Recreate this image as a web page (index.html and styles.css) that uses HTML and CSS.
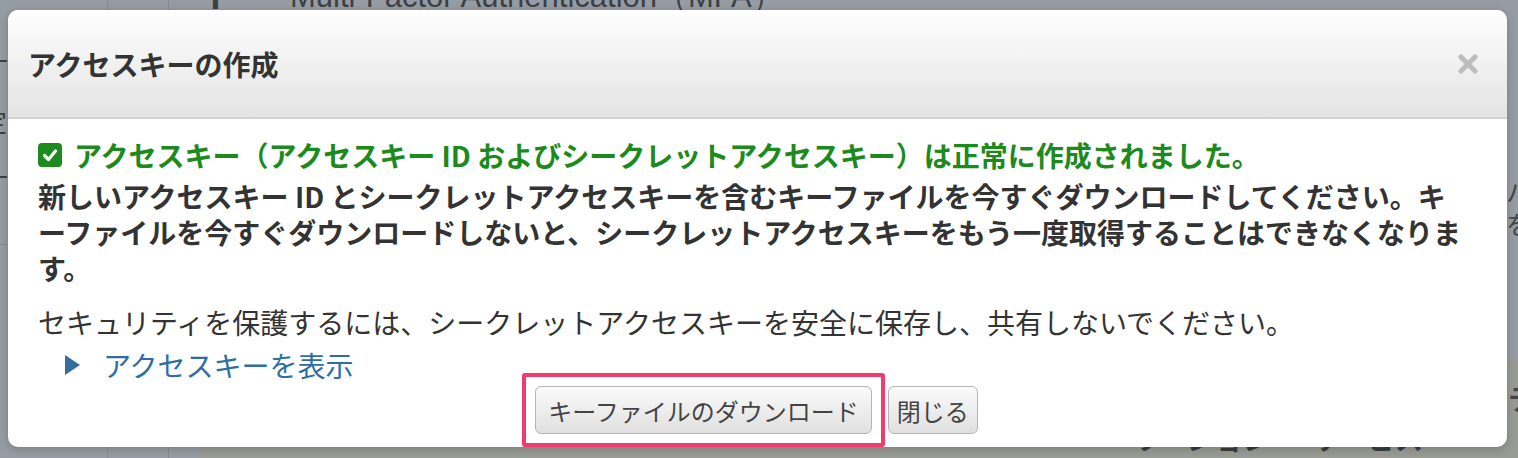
FILE: index.html
```html
<!DOCTYPE html>
<html lang="ja">
<head>
    <meta charset="UTF-8">
    <meta name="viewport" content="width=device-width, initial-scale=1.0">
    <title>アクセスキーの作成</title>
    <link rel="stylesheet" href="styles.css">
</head>
<body>
    <div class="page">
        <div class="side side-a">
            <span class="frag frag-dash"></span>
            <span class="frag frag-char">定</span>
            <span class="frag frag-dash"></span>
            <span class="frag frag-dots"></span>
        </div>
        <div class="side side-b"></div>
        <div class="main">
            <div class="main-top">
                <span class="plus">+</span>
                <span class="mfa">Multi-Factor Authentication（MFA）</span>
            </div>
            <div class="main-mid">
                <span class="edge-char">ハ</span>
                <span class="edge-char">を</span>
            </div>
            <div class="main-panel">
                <span class="edge-char edge-bold">テ</span>
                <div class="panel-cols">
                    <span>リージョン</span>
                    <span>サービス</span>
                </div>
            </div>
        </div>
    </div>

    <div class="modal">
        <div class="modal-header">
            <h3>アクセスキーの作成</h3>
            <svg class="close" width="20" height="20" viewBox="0 0 20 20">
                <path d="M3 3 L17 17 M17 3 L3 17" stroke="#bdbdbd" stroke-width="5" stroke-linecap="round" />
            </svg>
        </div>
        <div class="modal-body">
            <p class="success">
                <svg class="check" width="24" height="24" viewBox="0 0 24 24">
                    <rect x="0" y="0" width="24" height="24" rx="4" fill="#1c8a1c" />
                    <path d="M6.5 12.5 L10.5 16.5 L17.5 8" stroke="#fff" stroke-width="3.2" fill="none" stroke-linecap="round" stroke-linejoin="round" />
                </svg>
                アクセスキー（アクセスキー ID およびシークレットアクセスキー）は正常に作成されました。
            </p>
            <p class="warning">新しいアクセスキー ID とシークレットアクセスキーを含むキーファイルを今すぐダウンロードしてください。キーファイルを今すぐダウンロードしないと、シークレットアクセスキーをもう一度取得することはできなくなります。</p>
            <p class="note">セキュリティを保護するには、シークレットアクセスキーを安全に保存し、共有しないでください。</p>
            <div class="show-key">
                <svg width="15" height="20" viewBox="0 0 15 20">
                    <path d="M0 0 L15 10 L0 20 Z" fill="#336e9f" />
                </svg>
                <a href="#">アクセスキーを表示</a>
            </div>
            <div class="modal-footer">
                <div class="highlight">
                    <button class="btn">キーファイルのダウンロード</button>
                </div>
                <button class="btn btn-small">閉じる</button>
            </div>
        </div>
    </div>
</body>
</html>
```

FILE: styles.css
```css
body {
    margin: 0;
    padding: 0;
    width: 1518px;
    height: 458px;
    overflow: hidden;
    font-family: "Noto Sans CJK JP", sans-serif;
    background-color: #969ca3;
    position: relative;
}

/* dimmed page behind the dialog */
.page {
    display: flex;
    height: 458px;
}

.side {
    height: 100%;
    border-right: 1px solid #868c93;
    box-sizing: border-box;
}

.side-a {
    width: 108px;
    display: flex;
    flex-direction: column;
    padding-top: 60px;
}

.side-b {
    width: 61px;
}

.frag {
    display: block;
}

.frag-dash {
    width: 7px;
    height: 2px;
    background-color: #3d4145;
    margin-bottom: 56px;
}

.frag-char {
    font-size: 26px;
    line-height: 26px;
    color: #3d4145;
    margin-left: -19px;
    margin-top: -10px;
    margin-bottom: 42px;
}

.frag-dots {
    width: 7px;
    border-top: 1px dotted #6e747a;
    margin-top: 10px;
}

.main {
    flex: 1;
    display: flex;
    flex-direction: column;
    margin-left: 31px;
}

.main-top {
    display: flex;
    align-items: center;
    height: 10px;
    overflow: hidden;
    color: #3d4145;
    font-family: "Liberation Sans", Arial, sans-serif;
}

.main-top span {
    margin-top: -15px;
}

.plus {
    font-size: 46px;
    font-weight: bold;
    margin-left: 2px;
    width: 88px;
}

.mfa {
    font-size: 31px;
}

.main-mid {
    height: 353px;
    display: flex;
    flex-direction: column;
    align-items: flex-end;
    padding-top: 164px;
    box-sizing: border-box;
}

.edge-char {
    font-size: 26px;
    line-height: 33px;
    color: #43474b;
    margin-right: -14px;
}

.main-panel {
    flex: 1;
    background-color: #989b93;
    display: flex;
    flex-direction: column;
    align-items: flex-end;
    padding-top: 22px;
}

.edge-bold {
    font-size: 28px;
    font-weight: bold;
    margin-right: -18px;
}

.panel-cols {
    display: flex;
    gap: 40px;
    margin-top: 3px;
    margin-right: 95px;
    font-size: 28px;
    font-weight: bold;
    color: #3a3d40;
}

/* dialog */
.modal {
    position: absolute;
    top: 10px;
    left: 8px;
    width: 1499px;
    background-color: #fff;
    border-radius: 10px;
    overflow: hidden;
    box-shadow: 0 2px 8px rgba(0, 0, 0, 0.2);
}

.modal-header {
    height: 107px;
    display: flex;
    align-items: center;
    justify-content: space-between;
    padding: 0 29px 0 20px;
    background: linear-gradient(#fefefe, #e4e4e4);
    border-bottom: 2px solid #d2d2d2;
}

.modal-header h3 {
    margin: 0;
    font-size: 28px;
    font-weight: bold;
    color: #333;
}

.modal-body {
    padding: 18px 30px 0 30px;
}

.modal-body p {
    margin: 0;
    font-size: 28px;
    line-height: 36px;
}

.success {
    color: #1c8a1c;
    font-weight: bold;
    display: flex;
    align-items: center;
}

.check {
    margin-right: 12px;
    flex-shrink: 0;
}

.warning {
    margin-top: 5px !important;
    width: 1424px;
    font-weight: bold;
    color: #333;
}

.note {
    margin-top: 18px !important;
    color: #333;
}

.show-key {
    margin-top: 7px;
    display: flex;
    align-items: center;
    gap: 23px;
    padding-left: 27px;
    height: 36px;
}

.show-key a {
    color: #2c6ea5;
    text-decoration: none;
    font-size: 28px;
}

.modal-footer {
    display: flex;
    justify-content: center;
    align-items: center;
    gap: 3px;
    margin-top: -10px;
    padding-right: 15px;
}

.highlight {
    border: 4px solid #ef3b6e;
    border-radius: 3px;
    padding: 9px;
}

.btn {
    height: 48px;
    padding: 0 12px;
    font-family: "Noto Sans CJK JP", sans-serif;
    font-size: 24px;
    color: #444;
    background: linear-gradient(#fbfbfb, #e0e0e0);
    border: 1px solid #b5b5b5;
    border-radius: 6px;
    display: block;
}

.btn-small {
    padding: 0 8px;
}
```
